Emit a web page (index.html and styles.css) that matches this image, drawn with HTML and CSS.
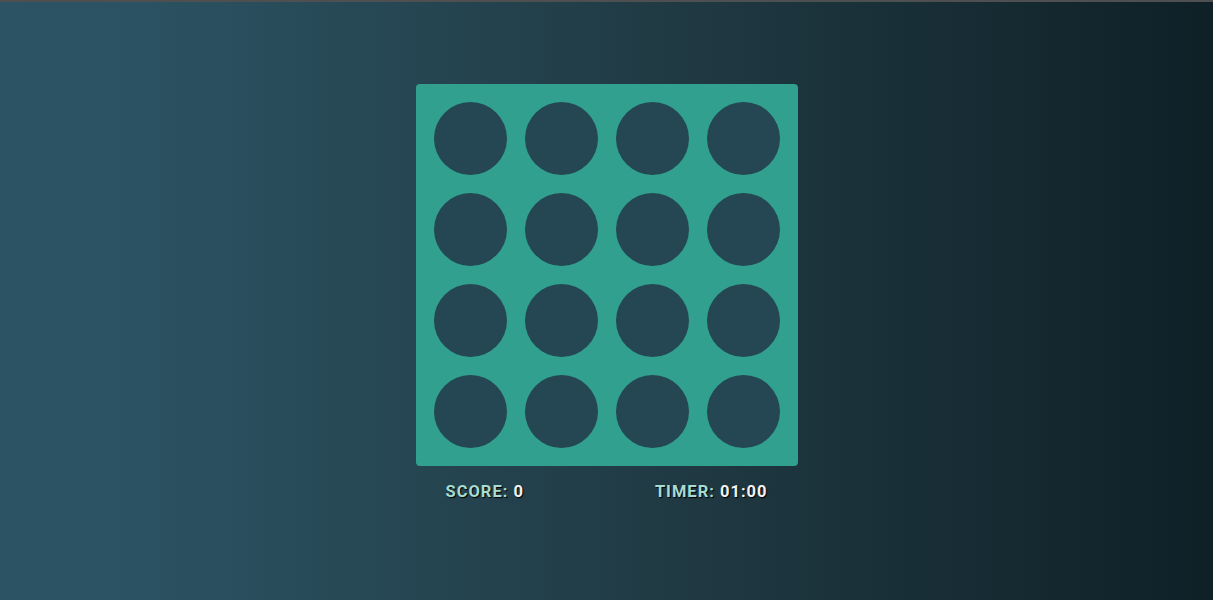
FILE: index.html
```html
<!DOCTYPE html>
<html lang="en">
<head>
<meta charset="utf-8">
<title>Whack</title>
<link rel="stylesheet" href="styles.css">
</head>
<body>
<div class="topbar"></div>
<main class="game">
  <div class="board">
    <div class="hole"></div><div class="hole"></div><div class="hole"></div><div class="hole"></div>
    <div class="hole"></div><div class="hole"></div><div class="hole"></div><div class="hole"></div>
    <div class="hole"></div><div class="hole"></div><div class="hole"></div><div class="hole"></div>
    <div class="hole"></div><div class="hole"></div><div class="hole"></div><div class="hole"></div>
  </div>
  <div class="stats">
    <div class="stat"><span class="label">SCORE:</span> <span class="value">0</span></div>
    <div class="stat"><span class="label">TIMER:</span> <span class="value">01:00</span></div>
  </div>
</main>
</body>
</html>
```

FILE: styles.css
```css
html, body {
  margin: 0;
  padding: 0;
}
body {
  min-height: 100vh;
  background: linear-gradient(to right, #2c5364 0%, #2b5262 12%, #203a43 55%, #0f2027 100%);
  font-family: Roboto, "Liberation Sans", sans-serif;
}
.topbar {
  height: 2px;
  background: #4d4f50;
}
.game {
  display: flex;
  flex-direction: column;
  align-items: center;
  padding-top: 82px;
}
.board {
  box-sizing: border-box;
  width: 382px;
  height: 382px;
  padding: 18px;
  background: #31a08f;
  border-radius: 4px;
  display: grid;
  grid-template-columns: repeat(4, 73px);
  grid-template-rows: repeat(4, 73px);
  gap: 18px;
}
.hole {
  border-radius: 50%;
  background: #244753;
}
.stats {
  box-sizing: border-box;
  width: 382px;
  padding: 0 30px;
  margin-top: 16px;
  display: flex;
  justify-content: space-between;
  font-size: 16.5px;
  font-weight: 700;
  letter-spacing: 1px;
  text-shadow: 1px 1px 1px #000;
}
.label {
  color: #a6dcd3;
}
.value {
  color: #f2f2f2;
}
```
